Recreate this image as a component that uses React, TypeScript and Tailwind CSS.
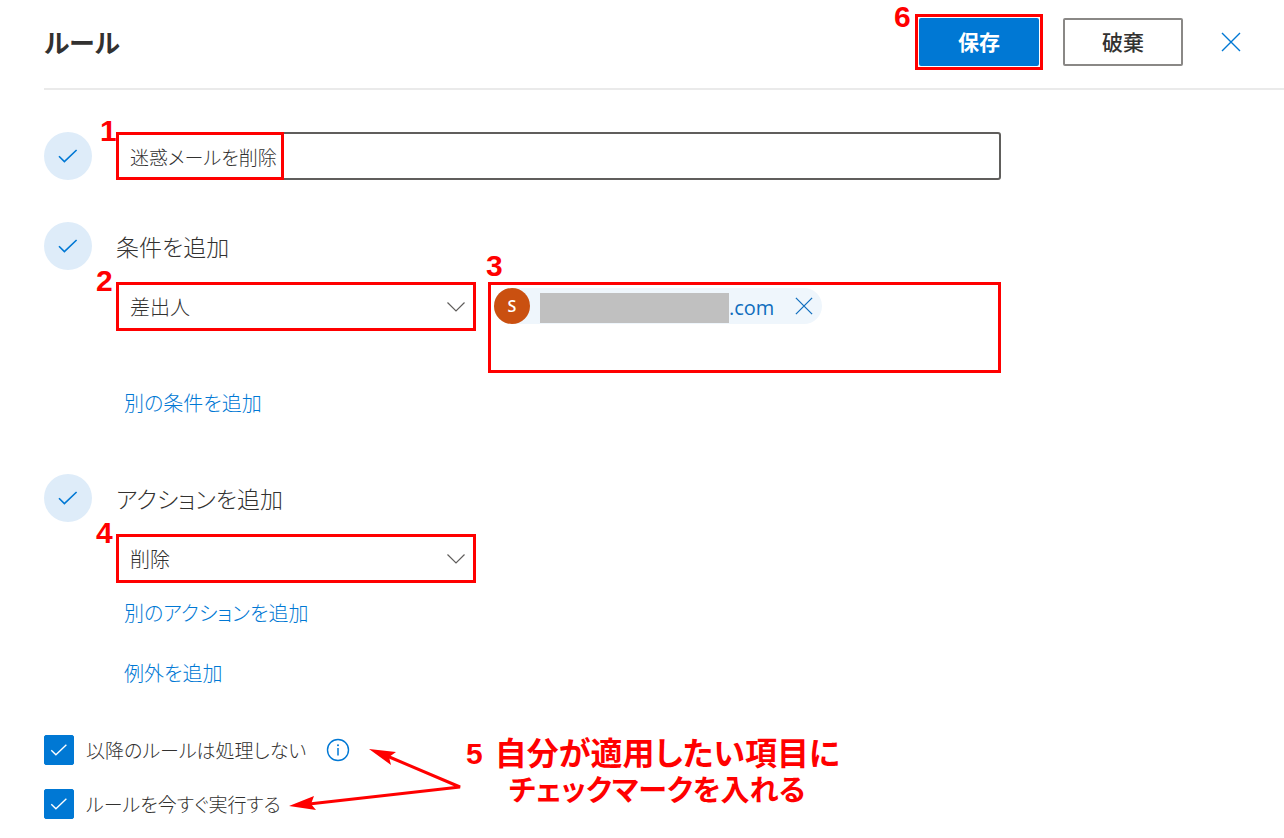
import React, { useState } from 'react';
import clsx from 'clsx';

interface CalloutProps {
  children: React.ReactNode;
  className: string;
}

interface StepProps {
  title?: string;
  children?: React.ReactNode;
}

interface DropdownProps {
  id: string;
  label: string;
  options: string[];
}

interface OptionProps {
  id: string;
  label: string;
}

function CheckIcon({ className }: { className: string }) {
  return (
    <svg viewBox="0 0 20 14" fill="none" stroke="currentColor" className={className}>
      <path d="M1 7.2 6.4 12.6 18.6 1" strokeWidth="1.6" />
    </svg>
  );
}

function CloseIcon({ className }: { className: string }) {
  return (
    <svg viewBox="0 0 20 20" fill="none" stroke="currentColor" className={className}>
      <path d="M1 1 19 19M19 1 1 19" strokeWidth="1.4" />
    </svg>
  );
}

function Callout({ children, className }: CalloutProps) {
  return (
    <span
      className={clsx(
        "pointer-events-none absolute font-['Liberation_Sans',sans-serif] text-[30px] leading-[30px] font-bold text-[#ff0000]",
        className
      )}
    >
      {children}
    </span>
  );
}

function Step({ title, children }: StepProps) {
  return (
    <section className="flex gap-6">
      <div className="flex size-12 shrink-0 items-center justify-center rounded-full bg-[#deecf9]">
        <CheckIcon className="h-[14px] w-5 text-[#0078d4]" />
      </div>
      <div className="max-w-[885px] min-w-0 flex-1">
        {title && <h2 className="mb-3 text-[23px] leading-[48px] font-light">{title}</h2>}
        {children}
      </div>
    </section>
  );
}

function Dropdown({ id, label, options }: DropdownProps) {
  return (
    <div className="grid h-[49px] w-[360px] items-center border-3 border-[#ff0000]">
      <select
        id={id}
        aria-label={label}
        className="col-start-1 row-start-1 h-full w-full appearance-none bg-transparent pr-10 pl-[11px] text-xl font-light outline-none"
      >
        {options.map((option) => (
          <option key={option}>{option}</option>
        ))}
      </select>
      <svg
        viewBox="0 0 18 10"
        fill="none"
        stroke="#605e5c"
        className="pointer-events-none col-start-1 row-start-1 mr-2 h-[10px] w-[18px] justify-self-end"
      >
        <path d="M.5.5 9 9 17.5.5" strokeWidth="1.2" />
      </svg>
    </div>
  );
}

function AddLink({ children }: { children: React.ReactNode }) {
  return (
    <a href="#" className="block w-fit px-2 text-xl leading-9 font-light text-[#0078d4]">
      {children}
    </a>
  );
}

function Option({ id, label }: OptionProps) {
  const [checked, setChecked] = useState(true);

  return (
    <div className="flex items-center">
      <div className="grid size-[30px] place-items-center">
        <input
          id={id}
          type="checkbox"
          checked={checked}
          onChange={(e) => setChecked(e.target.checked)}
          className="col-start-1 row-start-1 size-[30px] appearance-none rounded-xs border border-[#0078d4] checked:bg-[#0078d4]"
        />
        {checked && (
          <CheckIcon className="pointer-events-none col-start-1 row-start-1 h-3 w-[18px] text-white" />
        )}
      </div>
      <label htmlFor={id} className="pl-3 text-[19px] leading-[30px] font-light">
        {label}
      </label>
    </div>
  );
}

export default function App() {
  const [name, setName] = useState('迷惑メールを削除');

  return (
    <div className="min-h-screen bg-white pb-5 pl-11 font-['Noto_Sans_CJK_JP',sans-serif] text-[#323130] [font-feature-settings:'palt']">
      <header className="flex h-[90px] items-center justify-between border-b-2 border-[#eaeaea] pr-[29px] pb-1">
        <h1 className="text-[26px] leading-10 font-bold">ルール</h1>
        <div className="flex items-center gap-5">
          <div className="relative border-3 border-[#ff0000] p-px">
            <button className="block h-12 w-[120px] rounded-xs bg-[#0078d4] text-[21px] font-bold text-white">
              保存
            </button>
            <Callout className="-top-[15px] -left-6">6</Callout>
          </div>
          <button className="h-12 w-[120px] rounded-xs border-2 border-[#8a8886] text-[21px] font-medium">
            破棄
          </button>
          <button aria-label="閉じる" className="ml-1 flex size-12 items-center justify-center text-[#0078d4]">
            <CloseIcon className="size-5" />
          </button>
        </div>
      </header>

      <main className="pt-[42px]">
        <Step>
          <div className="relative">
            <input
              type="text"
              aria-label="ルール名"
              value={name}
              onChange={(e) => setName(e.target.value)}
              className="block h-12 w-full rounded-[3px] border-2 border-[#605e5c] px-3 text-[19px] font-light outline-none"
            />
            <div className="pointer-events-none absolute top-0 left-0 h-12 w-[168px] border-3 border-[#ff0000]" />
            <Callout className="-top-4 -left-4">1</Callout>
          </div>
        </Step>

        <div className="mt-[42px]">
          <Step title="条件を追加">
            <div className="flex items-start gap-3">
              <div className="relative">
                <Dropdown id="condition" label="条件" options={['差出人', '件名', '宛先']} />
                <Callout className="-top-4 -left-5">2</Callout>
              </div>
              <div className="relative h-[91px] flex-1 border-3 border-[#ff0000] p-[3px]">
                <div className="flex h-9 w-fit items-center rounded-full bg-[#eff6fc] pr-2">
                  <span className="flex size-9 items-center justify-center rounded-full bg-[#ca5010] font-['Open_Sans',sans-serif] text-base font-semibold text-white">
                    S
                  </span>
                  <span className="flex items-center pt-1 pl-[10px]">
                    <span className="h-[30px] w-[189px] bg-[#c0c0c0]" />
                    <span className="font-['Open_Sans',sans-serif] text-xl leading-[30px] text-[#106ebe]">.com</span>
                  </span>
                  <button aria-label="削除" className="ml-5 flex size-5 items-center justify-center text-[#106ebe]">
                    <CloseIcon className="size-[18px]" />
                  </button>
                </div>
                <Callout className="-top-[34px] -left-[5px]">3</Callout>
              </div>
            </div>
            <div className="mt-3">
              <AddLink>別の条件を追加</AddLink>
            </div>
          </Step>
        </div>

        <div className="mt-[53px]">
          <Step title="アクションを追加">
            <div className="relative w-fit">
              <Dropdown id="action" label="アクション" options={['削除', '移動', 'コピー']} />
              <Callout className="-top-4 -left-5">4</Callout>
            </div>
            <div className="mt-3 flex flex-col gap-6">
              <AddLink>別のアクションを追加</AddLink>
              <AddLink>例外を追加</AddLink>
            </div>
          </Step>
        </div>

        <div className="relative mt-11 flex flex-col gap-6">
          <div className="flex items-center gap-5">
            <Option id="stop-processing" label="以降のルールは処理しない" />
            <button aria-label="詳細情報" className="text-[#0078d4]">
              <svg viewBox="0 0 24 24" fill="none" stroke="currentColor" className="size-6">
                <circle cx="12" cy="12" r="10.5" strokeWidth="1.4" />
                <path d="M12 10v7.5" strokeWidth="1.5" />
                <circle cx="12" cy="7.2" r="1" fill="currentColor" stroke="none" />
              </svg>
            </button>
          </div>
          <Option id="run-now" label="ルールを今すぐ実行する" />

          {/* arrows pointing at both options */}
          <svg
            viewBox="0 0 172 66"
            className="pointer-events-none absolute top-[11px] left-[245px] h-[66px] w-[172px]"
          >
            <path d="M98 10 171 41 20 58" fill="none" stroke="#ff0000" strokeWidth="3" strokeLinejoin="bevel" />
            <path d="M80 3 107 6 100 11 102 19ZM0 60 25 50 22 58 27 64Z" fill="#ff0000" />
          </svg>
          <div className="pointer-events-none absolute -top-0.5 left-[422px] flex gap-3 font-bold whitespace-nowrap text-[#ff0000]">
            <span className="font-['Liberation_Sans',sans-serif] text-[30px] leading-[42px]">5</span>
            <div className="leading-[37px]">
              <p className="text-[32px]">自分が適用したい項目に</p>
              <p className="pl-[14px] text-[29px]">チェックマークを入れる</p>
            </div>
          </div>
        </div>
      </main>
    </div>
  );
}
